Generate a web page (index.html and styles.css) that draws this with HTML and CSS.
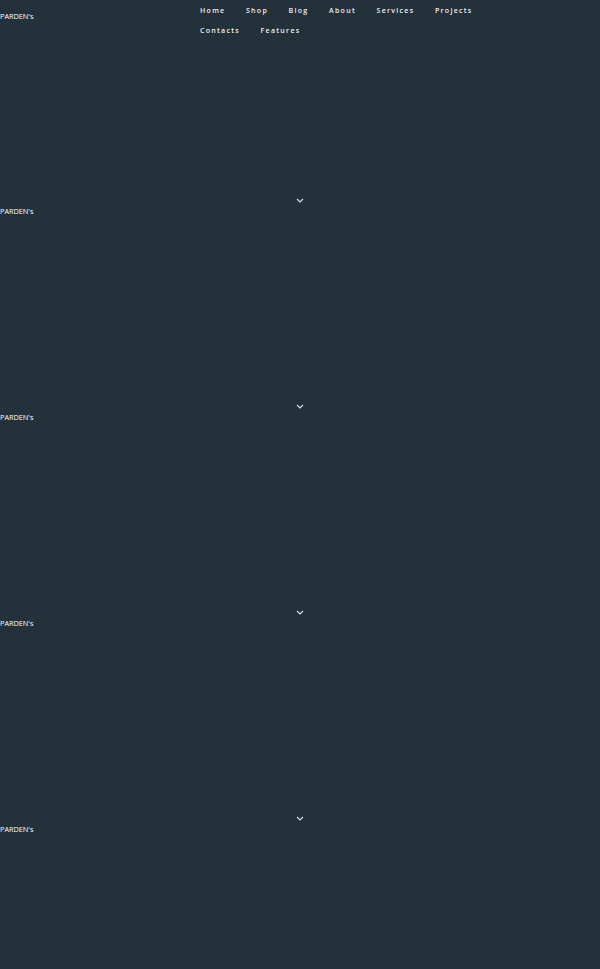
FILE: index.html
```html
<!DOCTYPE html>
<html lang="en">
<head>
  <meta charset="UTF-8" />
  <meta name="viewport" content="width=device-width, initial-scale=1.0"/>
  <title>PARDEN's</title>
  <link rel="stylesheet" href="styles.css">
</head>
<body>

  <!-- Intro section with navigation -->
  <div class="section">
    <div class="header">
      <div class="logo logo-top">PARDEN's</div>
      <ul class="nav">
        <li>Home</li>
        <li>Shop</li>
        <li>Blog</li>
        <li>About</li>
        <li>Services</li>
        <li>Projects</li>
        <li>Contacts</li>
        <li>Features</li>
      </ul>
    </div>
    <div class="scroll-down">
      <svg width="8" height="5" viewBox="0 0 8 5"><path d="M1 1 L4 4 L7 1" fill="none" stroke="#d8dde0" stroke-width="1.2"/></svg>
    </div>
  </div>

  <div class="section">
    <div class="logo">PARDEN's</div>
    <div class="scroll-down">
      <svg width="8" height="5" viewBox="0 0 8 5"><path d="M1 1 L4 4 L7 1" fill="none" stroke="#d8dde0" stroke-width="1.2"/></svg>
    </div>
  </div>

  <div class="section">
    <div class="logo">PARDEN's</div>
    <div class="scroll-down">
      <svg width="8" height="5" viewBox="0 0 8 5"><path d="M1 1 L4 4 L7 1" fill="none" stroke="#d8dde0" stroke-width="1.2"/></svg>
    </div>
  </div>

  <div class="section">
    <div class="logo">PARDEN's</div>
    <div class="scroll-down">
      <svg width="8" height="5" viewBox="0 0 8 5"><path d="M1 1 L4 4 L7 1" fill="none" stroke="#d8dde0" stroke-width="1.2"/></svg>
    </div>
  </div>

  <div class="section">
    <div class="logo">PARDEN's</div>
  </div>

</body>
</html>
```

FILE: styles.css
```css
* { margin: 0; padding: 0; box-sizing: border-box; font-family: 'Open Sans', sans-serif; }
body { background-color: #22313a; color: #f2f2f2; overflow: hidden; }
.section {
  height: 206px;
  display: flex;
  flex-direction: column;
  padding-bottom: 3px;
}
.header { display: flex; align-items: flex-start; }
.logo { font-size: 7.3px; line-height: 10px; color: #ffffff; }
.logo-top { width: 200px; padding-top: 11px; }
.nav {
  list-style: none;
  display: flex;
  flex-wrap: wrap;
  width: 300px;
  padding-top: 1px;
}
.nav li {
  font-size: 7px;
  font-weight: 600;
  letter-spacing: 1.3px;
  line-height: 19.5px;
  margin-right: 20.5px;
  color: #f0f0f0;
}
.scroll-down {
  margin-top: auto;
  display: flex;
  justify-content: center;
  line-height: 0;
}
```
